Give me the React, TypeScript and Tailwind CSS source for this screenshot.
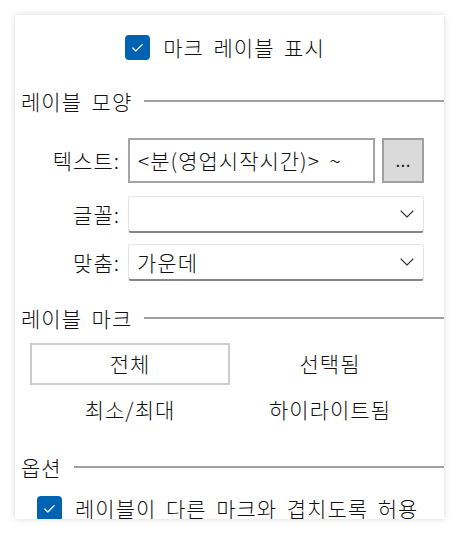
import { ChevronDown } from 'lucide-react';

const font = { fontFamily: '"Noto Sans CJK KR", "Noto Sans", sans-serif' };

function Check() {
  return (
    <span className="flex h-[25px] w-[25px] shrink-0 items-center justify-center rounded-[4px] bg-[#0063b1]">
      <svg width="15" height="15" viewBox="0 0 16 16" fill="none">
        <path d="M3 8.5l3.2 3.2L13 5" stroke="white" strokeWidth="1.3" strokeLinecap="round" strokeLinejoin="round" />
      </svg>
    </span>
  );
}

function Heading({ label }: { label: string }) {
  return (
    <div className="flex h-[28px] items-center pl-[6px]">
      <span className="whitespace-nowrap leading-[28px]">{label}</span>
      <div className="ml-[12px] h-[2px] flex-1 bg-[#a0a0a0]" />
    </div>
  );
}

function Select({ value, className }: { value?: string; className: string }) {
  return (
    <div className={`flex h-[37px] w-[296px] items-center justify-between rounded-[3px] border border-b-2 border-[#e3e3e3] border-b-[#868686] pl-[8px] pr-[4px] ${className}`}>
      <span className="leading-none">{value}</span>
      <ChevronDown size={24} strokeWidth={1.1} className="text-[#333]" />
    </div>
  );
}

export default function App() {
  return (
    <div className="min-h-screen bg-white px-[15px] pt-[15px] text-[21px] font-light tracking-[1px] [word-spacing:4px] text-[#111]" style={font}>
      <div className="h-[504px] w-[429px] overflow-hidden bg-white pt-[20px] shadow-[0_0_6px_rgba(0,0,0,0.16)]">
        {/* top checkbox */}
        <div className="flex h-[25px] items-center justify-center gap-[13px] pr-[9px]">
          <Check />
          <span className="leading-none">마크 레이블 표시</span>
        </div>

        <div className="mt-[27px]">
          <Heading label="레이블 모양" />
        </div>

        {/* form rows */}
        <div className="mt-[23px] flex h-[45px] items-center">
          <span className="w-[105px] text-right leading-none">텍스트:</span>
          <div className="ml-[8px] flex h-[45px] w-[247px] items-center overflow-hidden border-2 border-[#a5a5a5] pl-[8px] whitespace-nowrap">
            {'<분(영업시작시간)> ~'}
          </div>
          <div className="ml-[7px] flex h-[45px] w-[42px] items-center justify-center border-2 border-[#a0a0a0] bg-[#dadada] pb-[4px] tracking-normal">
            ...
          </div>
        </div>
        <div className="mt-[13px] flex items-center">
          <span className="w-[105px] text-right leading-none">글꼴:</span>
          <Select className="ml-[8px]" />
        </div>
        <div className="mt-[11px] flex items-center">
          <span className="w-[105px] text-right leading-none">맞춤:</span>
          <Select className="ml-[8px]" value="가운데" />
        </div>

        <div className="mt-[23px]">
          <Heading label="레이블 마크" />
        </div>

        <div className="ml-[15px] mt-[11px] grid w-[400px] grid-cols-2 gap-y-[4px]">
          <div className="flex h-[42px] items-center justify-center border-2 border-[#cccccc]">전체</div>
          <div className="flex h-[42px] items-center justify-center">선택됨</div>
          <div className="flex h-[42px] items-center justify-center">최소/최대</div>
          <div className="flex h-[42px] items-center justify-center">하이라이트됨</div>
        </div>

        <div className="mt-[22px]">
          <Heading label="옵션" />
        </div>

        <div className="ml-[22px] mt-[15px] flex items-center gap-[13px]">
          <Check />
          <span className="whitespace-nowrap leading-none">레이블이 다른 마크와 겹치도록 허용</span>
        </div>
      </div>
    </div>
  );
}
